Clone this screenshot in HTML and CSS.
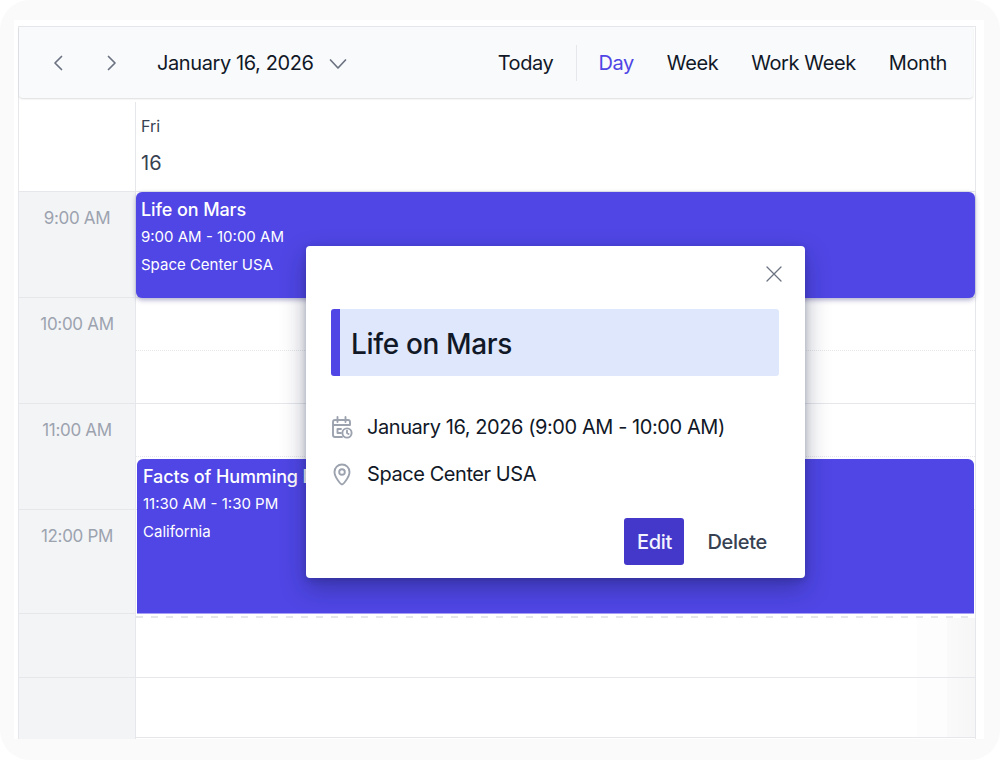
FILE: index.html
```html
<!DOCTYPE html>
<html lang="en">
<head>
<meta charset="utf-8">
<title>Scheduler</title>
<link rel="stylesheet" href="styles.css">
</head>
<body>
<div class="frame">
  <div class="sheet">
    <div class="cal">
      <div class="toolbar">
        <svg class="ico nav-prev" viewBox="0 0 12 18"><path d="M9.500 2.500 3 9l6.500 6.500"/></svg>
        <svg class="ico nav-next" viewBox="0 0 12 18"><path d="M2.500 2.500 9 9l-6.500 6.500"/></svg>
        <span class="date">January 16, 2026</span>
        <svg class="ico caret" viewBox="0 0 18 12"><path d="M1.500 2 9 10l7.500-8"/></svg>
        <span class="spacer"></span>
        <span class="tool today">Today</span>
        <span class="divider"></span>
        <span class="tool active">Day</span>
        <span class="tool">Week</span>
        <span class="tool">Work Week</span>
        <span class="tool">Month</span>
      </div>
      <div class="head">
        <div class="head-gutter"></div>
        <div class="head-day">
          <div class="dow">Fri</div>
          <div class="dom">16</div>
        </div>
      </div>
      <div class="body">
        <div class="times">
          <div class="t t-full"><span>9:00 AM</span></div>
          <div class="t t-full"><span>10:00 AM</span></div>
          <div class="t t-full"><span>11:00 AM</span></div>
          <div class="t t-noon"><span>12:00 PM</span></div>
          <div class="t t-short"></div>
          <div class="t t-rest"></div>
        </div>
        <div class="day">
          <div class="s s-full"></div>
          <div class="s s-half dotted"></div>
          <div class="s s-half"></div>
          <div class="s s-half dotted"></div>
          <div class="s s-half"></div>
          <div class="s-now"></div>
          <div class="s s-a"><i class="fade"></i></div>
          <div class="s s-b"><i class="fade"></i></div>
          <div class="event ev1">
            <div class="ev-title">Life on Mars</div>
            <div class="ev-line">9:00 AM - 10:00 AM</div>
            <div class="ev-line">Space Center USA</div>
          </div>
          <div class="event ev2">
            <div class="ev-title">Facts of Humming Birds</div>
            <div class="ev-line">11:30 AM - 1:30 PM</div>
            <div class="ev-line">California</div>
          </div>
        </div>
      </div>
      <div class="popup">
        <div class="pop-top">
          <svg class="ico close" viewBox="0 0 16 16"><path d="M1 1l14 14M15 1 1 15"/></svg>
        </div>
        <div class="pop-title">Life on Mars</div>
        <div class="pop-row pop-first">
          <svg class="pi" viewBox="0 0 22 24"><path d="M19 10V7a2 2 0 0 0-2-2H4a2 2 0 0 0-2 2v13a2 2 0 0 0 2 2h7M2 10h17M6.500 2v5M14.500 2v5M10 14H6.500v4H10"/><circle cx="16" cy="18" r="4.600"/><path d="M16 15.800V18l1.600 1"/></svg>
          <span>January 16, 2026 (9:00 AM - 10:00 AM)</span>
        </div>
        <div class="pop-row">
          <svg class="pi" viewBox="0 0 22 24"><path d="M11 22.500c-1 0-7.500-7.200-7.500-12.500a7.500 7.500 0 0 1 15 0c0 5.300-6.500 12.500-7.500 12.500Z"/><circle cx="11" cy="10" r="2.800"/></svg>
          <span>Space Center USA</span>
        </div>
        <div class="pop-actions">
          <button class="btn btn-edit">Edit</button>
          <button class="btn btn-del">Delete</button>
        </div>
      </div>
    </div>
  </div>
</div>
</body>
</html>
```
FILE: styles.css
```css
* { box-sizing: border-box; }
html, body { margin: 0; padding: 0; background: #fff; }
body { font-family: Inter, "Liberation Sans", sans-serif; color: #111827; overflow: hidden; }
.frame { width: 1000px; height: 760px; background: #fafafa; border-radius: 30px; padding: 20px 16px 21px 14px; }
.sheet { height: 719px; background: #fff; padding: 6px 8px 0 4px; overflow: hidden; }
.cal { position: relative; width: 958px; height: 720px; border: 1px solid #e5e7eb; border-bottom: 0; background: #fff; }

.ico { fill: none; stroke: #6b7280; stroke-width: 1.7; stroke-linecap: round; stroke-linejoin: round; flex: none; }
.toolbar { height: 71px; display: flex; align-items: center; background: #f9fafc; border-radius: 0 0 4px 4px; box-shadow: 0 1px 2px rgba(0,0,0,.14); padding: 0 26px 0 33px; font-size: 20px; letter-spacing: -.4px; position: relative; z-index: 1; margin-right: 2px; }
.nav-prev { width: 12px; height: 18px; }
.nav-next { width: 12px; height: 18px; margin-left: 42px; }
.date { margin-left: 39px; color: #111827; }
.caret { width: 18px; height: 12px; margin-left: 15px; margin-top: 3px; }
.spacer { flex: 1; }
.tool { color: #111827; margin-left: 33px; }
.today { margin-left: 0; }
.divider { width: 1px; height: 36px; background: #e5e7eb; margin: 0 -12px 0 23px; }
.active { color: #4f46e5; }

.head { height: 94px; display: flex; border-bottom: 1px solid #e5e7eb; padding-top: 4px; }
.head-gutter { width: 117px; border-right: 1px solid #e5e7eb; }
.head-day { padding: 12px 0 0 5px; }
.dow { font-size: 16px; line-height: 24px; color: #374151; }
.dom { font-size: 20px; line-height: 28px; margin-top: 11px; color: #374151; }

.body { display: flex; height: 560px; }
.times { width: 117px; flex: none; background: #f3f4f6; border-right: 1px solid #e5e7eb; }
.t { text-align: center; font-size: 17px; letter-spacing: -.3px; color: #9ca3af; border-bottom: 1px solid #e5e7eb; padding-top: 14px; line-height: 24px; }
.t-full { height: 106px; }
.t-noon { height: 104px; }
.t-short { height: 64px; }
.t-rest { height: 80px; border-bottom: 0; }

.day { position: relative; flex: 1; min-width: 0; }
.s { border-bottom: 1px solid #e5e7eb; position: relative; }
.s-full { height: 106px; }
.s-half { height: 53px; }
.dotted { border-bottom: 1px dotted #e5e7eb; }
.s-now { height: 108px; background: linear-gradient(90deg, #e5e7eb 7px, transparent 7px) 0 100% / 15px 2px repeat-x; }
.s-a { height: 60px; }
.s-b { height: 60px; }
.fade { position: absolute; top: 0; right: 0; bottom: 0; width: 58px; background: linear-gradient(90deg, #fdfdfd 0, #fdfdfd 30px, #fafafa 30px, #f6f6f7 100%); }

.event { position: absolute; color: #fff; background: #4f46e5; }
.ev1 { left: 0; top: 0; width: 839px; height: 106px; padding: 4px 0 0 5px; border-radius: 6px; box-shadow: 0 2px 5px rgba(55,50,130,.4); }
.ev2 { left: 1px; top: 267px; width: 837px; height: 154px; padding: 4px 0 0 6px; border-radius: 6px 6px 0 0; box-shadow: 0 1px 0 #a5a0f3; white-space: nowrap; overflow: hidden; }
.ev-title { font-size: 18px; font-weight: 500; line-height: 27px; letter-spacing: -.1px; }
.ev-line { font-size: 15px; line-height: 28px; }

.popup { position: absolute; left: 287px; top: 219px; width: 499px; height: 332px; background: #fff; border-radius: 4px; padding: 0 26px 0 25px; box-shadow: 0 10px 25px rgba(17,24,60,.35), 0 2px 6px rgba(17,24,60,.2); z-index: 2; display: flex; flex-direction: column; }
.pop-top { height: 63px; display: flex; justify-content: flex-end; padding: 20px 0 0; }
.close { width: 16px; height: 16px; margin-right: -3px; stroke-width: 1.3; }
.pop-title { height: 67px; background: #dfe7fd; border-left: 9px solid #4f46e5; border-radius: 3px; font-size: 28px; font-weight: 500; line-height: 70px; letter-spacing: -.35px; padding-left: 11px; color: #111827; }
.pop-row { display: flex; align-items: center; height: 24px; font-size: 20px; letter-spacing: -.43px; margin-top: 23px; color: #111827; }
.pop-first { margin-top: 39px; }
.pi { width: 22px; height: 24px; margin-right: 14px; fill: none; stroke: #9ca3af; stroke-width: 1.9; stroke-linecap: round; stroke-linejoin: round; flex: none; }
.pop-actions { display: flex; margin-top: 32px; justify-content: flex-end; margin-right: 12px; align-items: center; }
.btn { font-family: inherit; font-size: 20px; font-weight: 500; letter-spacing: -.3px; border: 0; background: none; padding: 0; height: 47px; }
.btn-edit { width: 60px; background: #4338ca; color: #f3f4ff; border-radius: 3px; }
.btn-del { margin-left: 23px; color: #374151; }
```
